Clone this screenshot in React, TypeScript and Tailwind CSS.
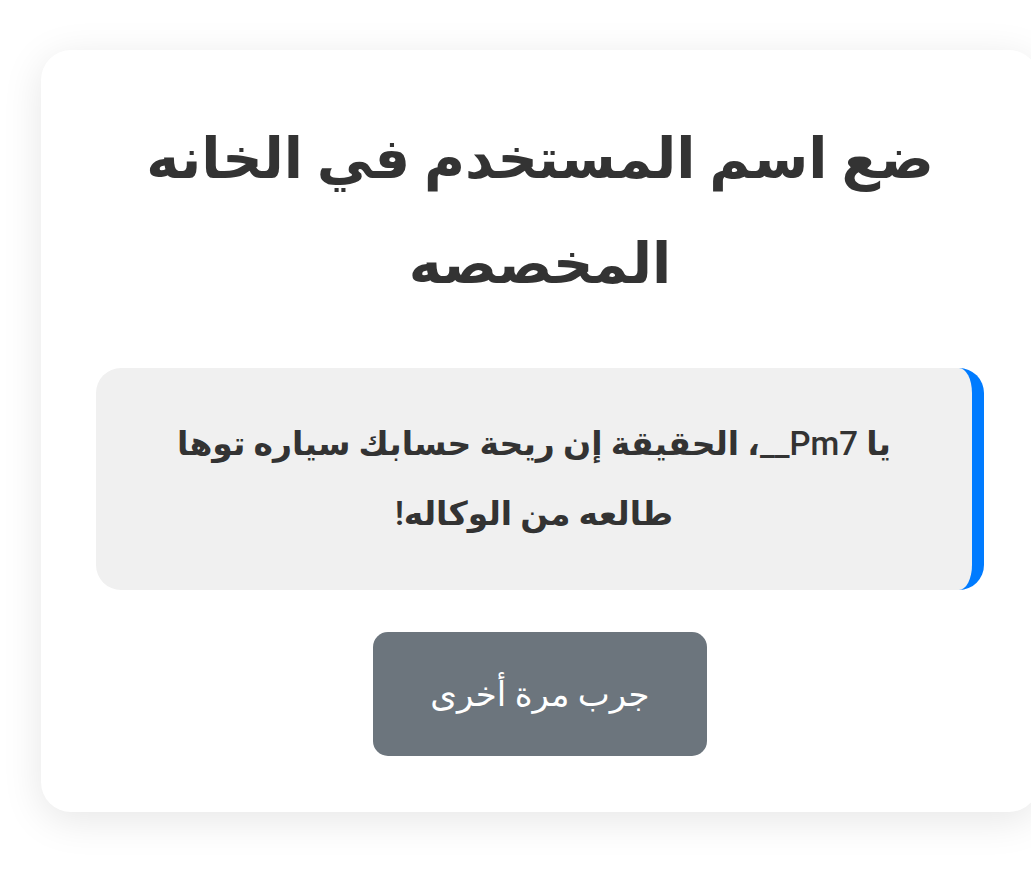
export default function App() {
  return (
    <div className="w-full min-h-[884px] overflow-hidden bg-white" dir="rtl">
      <div className="pt-[50px] pb-[72px]" dir="ltr">
        <div
          dir="rtl"
          className="ml-[41px] w-[998px] rounded-[30px] bg-white px-[55px] pt-[57px] pb-[56px] text-center text-[#333333] shadow-[0_8px_40px_rgba(0,0,0,0.10)]"
          style={{ fontFamily: 'Roboto, "Noto Sans", "DejaVu Sans", sans-serif' }}
        >
          <h1 className="text-[56px] font-bold leading-[105px]">
            ضع اسم المستخدم في الخانه المخصصه
          </h1>
          <div className="mt-[51px] rounded-[25px] border-r-[12px] border-[#007bff] bg-[#f0f0f0] px-[60px] py-[41px]">
            <p className="text-[33px] font-semibold leading-[70px] text-[#333333]">
              يا <span className="font-medium">Pm7__</span>، الحقيقة إن ريحة حسابك سياره توها طالعه من الوكاله!
            </p>
          </div>
          <button className="mt-[42px] h-[124px] w-[334px] rounded-[15px] bg-[#6c757d] text-[34px] text-white">
            جرب مرة أخرى
          </button>
        </div>
      </div>
    </div>
  );
}
